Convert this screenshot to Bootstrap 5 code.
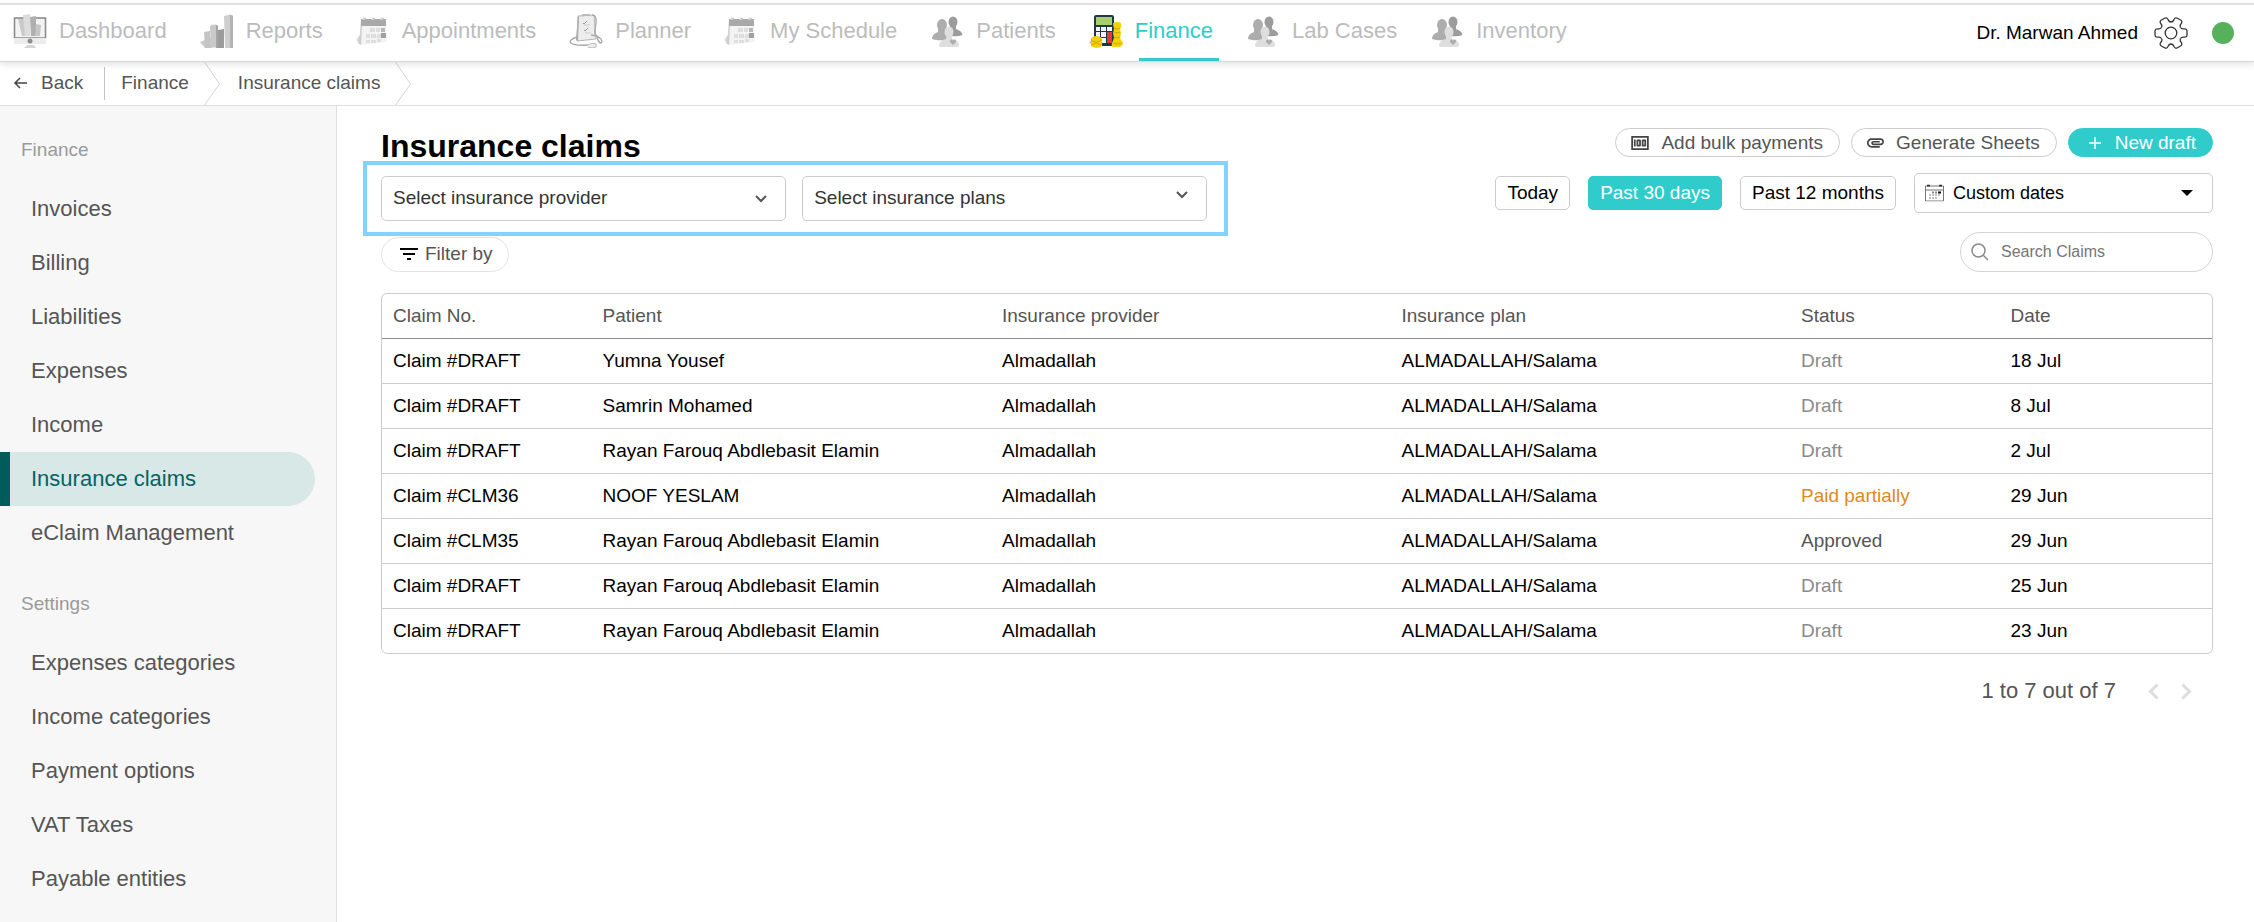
<!DOCTYPE html>
<html lang="en">
<head>
<meta charset="utf-8">
<meta name="viewport" content="width=device-width, initial-scale=1">
<title>Insurance claims</title>
<link rel="stylesheet" href="https://cdn.jsdelivr.net/npm/bootstrap@5.3.0/dist/css/bootstrap.min.css">
<style>
  :root { --teal: #30cccc; --line: #ccc; --ink: #555; }
  body { font-family: "Liberation Sans", Arial, sans-serif; font-size: 19px; line-height: 28px; color: #000; background: #fff; }
  a { color: inherit; text-decoration: none; }
  svg { flex: none; display: block; }

  /* top bar */
  .topbar { margin-top: 3px; border-top: 2px solid #e0e0e0; border-bottom: 1px solid #d6d6d6; height: 59px; padding: 0 20px 0 13px; box-shadow: 0 3px 6px rgba(0,0,0,.1); position: relative; z-index: 2; background: #fff; }
  .main-nav { gap: 33px; font-size: 22px; color: #bcbcbc; }
  .main-nav a { display: flex; align-items: center; gap: 12px; height: 56px; padding-bottom: 4px; }
  .main-nav .current { color: var(--teal); position: relative; }
  .main-nav .current::after { content: ""; position: absolute; bottom: 0; left: 50px; right: -6px; height: 3px; background: var(--teal); }
  .online-dot { width: 22px; height: 22px; background: #57b05c; }

  /* breadcrumb bar */
  .crumbs { height: 44px; border-bottom: 1px solid #e0e0e0; color: var(--ink); padding-left: 13px; }
  .crumbs a { padding-bottom: 2px; }
  .crumbs .back { gap: 13px; padding-right: 21px; }
  .crumb-first { padding: 0 15px 0 16px; }
  .crumb-next { padding: 0 15px 0 17px; }
  .crumb-rule { width: 1px; height: 33px; background: #c4c4c4; }

  /* sidebar */
  .page-body { min-height: calc(100vh - 106px); }
  .sidebar { width: 337px; background: #f7f7f7; border-right: 1px solid #e0e0e0; flex: none; }
  .sidebar h2 { font-size: 19px; line-height: 28px; font-weight: 400; color: #9a9a9a; margin: 0; padding: 30px 21px 18px; }
  .sidebar a { display: block; font-size: 22px; line-height: 54px; padding-left: 31px; margin-right: 21px; color: var(--ink); }
  .sidebar a.active { color: #056363; background: #d8e8e7; border-left: 10px solid #005c5c; padding-left: 21px; border-radius: 0 27px 27px 0; }

  /* content */
  .content { padding: 22px 41px 0 44px; min-width: 0; }
  .content h1 { font-size: 32px; line-height: 30px; font-weight: 700; margin: 0; padding-top: 3px; }
  .left-tools { width: 46.25%; }
  .highlight { border: 4px solid #80d4ff; margin-left: -18px; padding: 11px 17px 11px 14px; gap: 16px; }
  .field { border: 1px solid var(--line); border-radius: 5px; height: 45px; font-size: 19px; line-height: 28px; padding: 0 40px 2px 11px; color: #333; background-size: 12px 8px; }
  .provider { background-image: url("data:image/svg+xml,%3Csvg xmlns='http://www.w3.org/2000/svg' viewBox='0 0 12 8'%3E%3Cpath d='M1 1l5 5 5-5' fill='none' stroke='%23555' stroke-width='2'/%3E%3C/svg%3E"); background-position: right 18px center; }
  .plans { background-image: url("data:image/svg+xml,%3Csvg xmlns='http://www.w3.org/2000/svg' viewBox='0 0 12 8'%3E%3Cpath d='M1 1l5 5 5-5' fill='none' stroke='%23555' stroke-width='2'/%3E%3C/svg%3E"); background-position: right 18px top 14px; }
  .pill, .pill:hover { display: flex; align-items: center; font-size: 19px; line-height: 27px; border: 1px solid var(--line); border-radius: 18px; background: #fff; color: var(--ink); padding: 0 16px 0 15px; height: 29px; gap: 12px; }
  .action-row { gap: 11px; }
  .filter-pill { height: 35px; border-color: #e3e3e3; padding: 0 15px 2px 18px; gap: 7px; margin-top: 1px; }
  .new-pill, .new-pill:hover { background: var(--teal); border-color: var(--teal); color: #fff; padding-left: 20px; gap: 14px; }
  .range { gap: 18px; margin-top: 16px; }
  .range .btn { font-size: 19px; line-height: 32px; padding: 0 11px; border: 1px solid var(--line); border-radius: 5px; background: #fff; color: #000; }
  .range .btn.chosen { background: var(--teal); border-color: var(--teal); color: #fff; }
  .dates { width: 299px; height: 40px; font-size: 18px; color: #000; padding: 0 40px 0 38px; background-image: url("data:image/svg+xml,%3Csvg xmlns='http://www.w3.org/2000/svg' viewBox='0 0 12 6'%3E%3Cpath d='M0 0h12L6 6z'/%3E%3C/svg%3E"); background-size: 12px 6px; background-position: right 19px center; }
  .over-left { position: absolute; left: 11px; top: 50%; transform: translateY(-50%); pointer-events: none; }
  .search-wrap { margin-top: 19px; width: 253px; }
  .search-wrap input { height: 40px; border-radius: 20px; border: 1px solid #d4d4d4; font-size: 16px; padding: 0 12px 0 40px; }
  .search-wrap input::placeholder { color: #757575; }

  /* claims table */
  .claims-box { border: 1px solid var(--line); border-radius: 6px; margin-top: 21px; overflow: hidden; }
  .claims { table-layout: fixed; border-collapse: separate; border-spacing: 0; margin: 0; color: #000; --bs-table-bg: transparent; }
  .claims th, .claims td { font-weight: 400; line-height: 26px; height: 45px; padding: 0 11px; vertical-align: middle; border: 0; border-bottom: 1px solid var(--line); box-shadow: none; color: #000; }
  .claims thead th { color: var(--ink); border-bottom-color: #8c8c8c; }
  .claims tbody tr:last-child td { border-bottom: 0; height: 44px; }
  .narrow { width: 11.45%; }
  .wide { width: 21.83%; }
  .claims .draft { color: #8a8a8a; }
  .claims .partial { color: #dd8a22; }
  .claims .approved { color: var(--ink); }
  .pager { font-size: 22px; color: var(--ink); padding: 23px 10px 0 0; }
  .pager span { margin-right: 21px; }
  .pager button { border: 0; background: none; padding: 0 11px; }
</style>
</head>
<body>
<svg width="0" height="0" class="position-absolute" aria-hidden="true">
  <defs>
    <symbol id="i-cal" viewBox="0 0 34 34">
      <path d="M0 26l5-7 2 10-3 1z" fill="#dcdcdc"/>
      <path d="M5 5h25v9l1 14-26 3-1-3z" fill="#f3f3f3"/>
      <path d="M5 5l-1 17-2 7 3 2 1-18z" fill="#ccc"/>
      <path d="M5 5h25v7H5z" fill="#a9a9a9"/>
      <path d="M8 6V3.500M17 6V3.500M26 6V3.500" stroke="#ddd" stroke-width="3"/>
      <path d="M9 6V4M18 6V4M27 6V4" stroke="#aaa" stroke-width="1"/>
      <path d="M14 14h5v4h-5zM20 14h4v4h-4zM10 20h4v4h-4zM15 20h5v4h-5zM21 20h4v4h-4zM10 26h4v3h-4zM15 26h5v3h-5zM21 25h4v3h-4z" fill="#dedede"/>
      <path d="M25 14h4v4h-4z" fill="#b9b9b9"/><path d="M25 19h5v5h-5z" fill="#a0a0a0"/>
    </symbol>
    <symbol id="i-people" viewBox="0 0 34 34">
      <ellipse cx="23" cy="8" rx="4.500" ry="5.500" fill="#9c9c9c"/><path d="M20 12h6v3q6 2 6.500 6-5 2-11 1z" fill="#9c9c9c"/>
      <ellipse cx="12" cy="11" rx="5" ry="6" fill="#adadad"/><path d="M8 15h8v3l6 4-3 4q-12 1-17-1 0-5 6-7z" fill="#adadad"/>
      <ellipse cx="19" cy="18" rx="4.500" ry="5.500" fill="#dedede"/><path d="M16 22h6v3q7 1 7 6 0 2-2 2H11q-2 0-2-2 1-5 7-6z" fill="#dedede"/>
      <path d="M23 31l-3-3q-.5-2.500 1.500-2.500 1 0 1.500 1 .5-1 1.500-1 2 0 1.500 2.500z" fill="#adadad"/>
    </symbol>
  </defs>
</svg>

<header class="topbar d-flex justify-content-between align-items-center">
  <nav class="main-nav d-flex" aria-label="Main">
    <a href="#"><svg width="34" height="34" viewBox="0 0 34 34"><rect x="1.500" y="4" width="31" height="20" fill="#f3f3f3" stroke="#8d8d8d" stroke-width="1.600"/><path d="M5 5h6l2 17H9z" fill="#cacaca"/><path d="M10 1l7-1v22h-5z" fill="#dcdcdc"/><path d="M17 3l6-1v20h-5z" fill="#b0b0b0"/><path d="M23 10l5 1-1 11h-5z" fill="#c6c6c6"/><path d="M1 24h32v6H1z" fill="#ececec"/><circle cx="17" cy="27" r="2.500" fill="#8e8e8e"/><path d="M14 31h7l2 3H11z" fill="#d5d5d5"/></svg>Dashboard</a>
    <a href="#"><svg width="34" height="34" viewBox="0 0 34 34"><path d="M0 28l5-2v8zM8 24l4-2v12H9z" fill="#c9c9c9"/><path d="M4 18l6-1v17H5z" fill="#c4c4c4"/><path d="M10 13l1-2 5-.5 2 1v22h-7z" fill="#c9c9c9"/><path d="M16 11l2 1v22h-2z" fill="#a5a5a5"/><path d="M18 16l6-1v19h-6z" fill="#9c9c9c"/><path d="M24 2l6-1.500 3 1V34h-8z" fill="#cfcfcf"/><path d="M30 1l3 1v32h-3z" fill="#b4b4b4"/></svg>Reports</a>
    <a href="#"><svg width="34" height="34"><use href="#i-cal"/></svg>Appointments</a>
    <a href="#"><svg width="34" height="34" viewBox="0 0 34 34" fill="none"><path d="M9 2l16-1 2 24-19 2z" fill="#ededed" stroke="#b5b5b5"/><path d="M9 2L7 26l2 1 1-24z" fill="#aaa"/><path d="M13 2q3-3 8-.5" stroke="#bbb" stroke-width="2"/><path d="M14 9l1 1 3-3M15 16l1 1 3-3" stroke="#999"/><path d="M15 11h6M16 19h6" stroke="#ccc"/><path d="M8 23q-9 3-6 6t17 2M23 1q5 0 4 8l-1 7q-1 4 2 6l4 3q2 4-1 4-3-3-3-7l-6-1" stroke="#a9a9a9" stroke-width="1.400"/><path d="M19 31q4-3 8-1v3q-4 2-8 0" stroke="#bbb" fill="#eee"/></svg>Planner</a>
    <a href="#"><svg width="34" height="34"><use href="#i-cal"/></svg>My Schedule</a>
    <a href="#"><svg width="34" height="34"><use href="#i-people"/></svg>Patients</a>
    <a href="#" class="current" aria-current="page"><svg width="34" height="34" viewBox="0 0 34 34"><rect x="5" y="1" width="20" height="31" rx="2" fill="#203746"/><rect x="7" y="3" width="16" height="8" fill="#a8cf6d"/><path d="M7 13h4v4H7zM12 13h5v4h-5zM18 13h5v4h-5zM7 18h4v5H7zM12 18h5v5h-5zM12 24h5v5h-5z" fill="#f1f5f8"/><path d="M18 18h5v11h-5z" fill="#e23a35"/><path d="M24 10q0-2 4-2t4 2v3l-1 2 1 4-1 5 3 5q0 3-4 4h-6q-2-1-1-4l2-5-1-5 1-4z" fill="#f5d000"/><path d="M25 14q3 2 6 0M25 18q3 2 6 0M25 23q3 2 6 0M24 29q4 2 8 0" stroke="#cda900" fill="none"/><path d="M0 29l3-4v5z" fill="#bbb"/><path d="M2 24q5-4 11 0v8q-5 4-11 0z" fill="#f5d000"/><path d="M2 26q5 4 11 0M2 31l5-2 5 2" stroke="#cda900" fill="none"/></svg>Finance</a>
    <a href="#"><svg width="34" height="34"><use href="#i-people"/></svg>Lab Cases</a>
    <a href="#"><svg width="34" height="34"><use href="#i-people"/></svg>Inventory</a>
  </nav>
  <div class="d-flex align-items-center">
    <span>Dr. Marwan Ahmed</span>
    <a href="#" aria-label="Settings" class="ms-3 me-4"><svg width="34" height="32" viewBox="-17 -16 34 32" fill="none" stroke="#333" stroke-width="1.300"><defs><path id="tooth" d="M9.500-5.500q1 1.600 3 1.400 3.500-.6 3.500 2.300v3.600q0 2.900-3.500 2.300-2-.2-3 1.400"/></defs><use href="#tooth"/><use href="#tooth" transform="rotate(60)"/><use href="#tooth" transform="rotate(120)"/><use href="#tooth" transform="rotate(180)"/><use href="#tooth" transform="rotate(240)"/><use href="#tooth" transform="rotate(300)"/><circle r="5.800"/></svg></a>
    <span class="online-dot rounded-circle"></span>
  </div>
</header>

<nav class="crumbs d-flex align-items-center" aria-label="Breadcrumb">
  <a href="#" class="back d-flex align-items-center"><svg width="15" height="12" viewBox="0 0 15 12" fill="none" stroke="#444" stroke-width="1.500"><path d="M14 6H2M7 1L2 6l5 5"/></svg>Back</a>
  <span class="crumb-rule"></span>
  <a href="#" class="crumb-first">Finance</a>
  <svg width="17" height="43" viewBox="0 0 17 43" fill="none" stroke="#d4d4d4"><path d="M.5 0l15 22-15 21"/></svg>
  <a href="#" class="crumb-next">Insurance claims</a>
  <svg width="17" height="43" viewBox="0 0 17 43" fill="none" stroke="#d4d4d4"><path d="M.5 0l15 22-15 21"/></svg>
</nav>

<div class="page-body d-flex">
  <aside class="sidebar">
    <h2>Finance</h2>
    <nav aria-label="Finance">
      <a href="#">Invoices</a>
      <a href="#">Billing</a>
      <a href="#">Liabilities</a>
      <a href="#">Expenses</a>
      <a href="#">Income</a>
      <a href="#" class="active" aria-current="page">Insurance claims</a>
      <a href="#">eClaim Management</a>
    </nav>
    <h2>Settings</h2>
    <nav aria-label="Settings">
      <a href="#">Expenses categories</a>
      <a href="#">Income categories</a>
      <a href="#">Payment options</a>
      <a href="#">VAT Taxes</a>
      <a href="#">Payable entities</a>
    </nav>
  </aside>

  <main class="content flex-grow-1">
    <div class="d-flex justify-content-between align-items-start">
      <div class="left-tools">
        <h1>Insurance claims</h1>
        <div class="highlight d-flex">
          <select class="form-select field provider" aria-label="Insurance provider"><option>Select insurance provider</option></select>
          <select class="form-select field plans" aria-label="Insurance plans"><option>Select insurance plans</option></select>
        </div>
        <button type="button" class="btn pill filter-pill"><svg width="18" height="12" viewBox="3 6 18 12"><path d="M10 18h4v-2h-4v2zM3 6v2h18V6H3zm3 7h12v-2H6v2z"/></svg>Filter by</button>
      </div>
      <div class="d-flex flex-column align-items-end">
        <div class="d-flex action-row">
          <button type="button" class="btn pill"><svg width="18" height="14" viewBox="2 4 20 16" fill="#444"><path d="M5 8h2v8H5zm7 0H9c-.55 0-1 .45-1 1v6c0 .55.45 1 1 1h3c.55 0 1-.45 1-1V9c0-.55-.45-1-1-1zm-1 6h-1v-4h1v4zm7-6h-3c-.55 0-1 .45-1 1v6c0 .55.45 1 1 1h3c.55 0 1-.45 1-1V9c0-.55-.45-1-1-1zm-1 6h-1v-4h1v4zM2 4v16h20V4H2zm2 14V6h16v12H4z"/></svg>Add bulk payments</button>
          <button type="button" class="btn pill"><svg width="17" height="10" viewBox="2 7 20 11" fill="#444"><path d="M2 12.500C2 9.460 4.460 7 7.500 7H18c2.210 0 4 1.790 4 4s-1.790 4-4 4H9.500C8.120 15 7 13.880 7 12.500S8.120 10 9.500 10H17v2H9.410c-.55 0-.55 1 0 1H18c1.100 0 2-.9 2-2s-.9-2-2-2H7.500C5.570 9 4 10.570 4 12.500S5.570 16 7.500 16H17v2H7.500C4.460 18 2 15.540 2 12.500z"/></svg>Generate Sheets</button>
          <button type="button" class="btn pill new-pill"><svg width="12" height="12" viewBox="0 0 12 12" stroke="#fff" stroke-width="1.500"><path d="M6 0v12M0 6h12"/></svg>New draft</button>
        </div>
        <div class="range d-flex align-items-center">
          <button type="button" class="btn">Today</button>
          <button type="button" class="btn chosen">Past 30 days</button>
          <button type="button" class="btn">Past 12 months</button>
          <div class="position-relative">
            <select class="form-select field dates" aria-label="Custom dates"><option>Custom dates</option></select>
            <svg class="over-left" width="19" height="17" viewBox="0 0 19 17"><path d="M.5 1.500h18v15H.5z" fill="none" stroke="#777"/><path d="M1 5.500h17" stroke="#777"/><path d="M2 0h3v2H2zM14 0h3v2h-3z" fill="#333"/><path d="M7 7h2v2H7zM10 7h2v2h-2zM4 10h2v1H4zM7 10h2v1H7zM10 10h2v1h-2zM13 10h2v1h-2zM4 13h2v1H4zM7 13h2v1H7zM10 13h2v1h-2z" fill="#888"/><path d="M13 7h3v2h-3z" fill="#111"/></svg>
          </div>
        </div>
        <div class="search-wrap position-relative">
          <input type="search" class="form-control" placeholder="Search Claims" aria-label="Search Claims">
          <svg class="over-left" width="18" height="18" viewBox="0 0 18 18" fill="none" stroke="#8c8c8c" stroke-width="1.500"><circle cx="7.500" cy="7.500" r="6.500"/><path d="M12 12l5 5"/></svg>
        </div>
      </div>
    </div>

    <div class="claims-box">
      <table class="table claims">
        <colgroup><col class="narrow"><col class="wide"><col class="wide"><col class="wide"><col class="narrow"><col></colgroup>
        <thead><tr><th>Claim No.</th><th>Patient</th><th>Insurance provider</th><th>Insurance plan</th><th>Status</th><th>Date</th></tr></thead>
        <tbody>
          <tr><td>Claim #DRAFT</td><td>Yumna Yousef</td><td>Almadallah</td><td>ALMADALLAH/Salama</td><td class="draft">Draft</td><td>18 Jul</td></tr>
          <tr><td>Claim #DRAFT</td><td>Samrin Mohamed</td><td>Almadallah</td><td>ALMADALLAH/Salama</td><td class="draft">Draft</td><td>8 Jul</td></tr>
          <tr><td>Claim #DRAFT</td><td>Rayan Farouq Abdlebasit Elamin</td><td>Almadallah</td><td>ALMADALLAH/Salama</td><td class="draft">Draft</td><td>2 Jul</td></tr>
          <tr><td>Claim #CLM36</td><td>NOOF YESLAM</td><td>Almadallah</td><td>ALMADALLAH/Salama</td><td class="partial">Paid partially</td><td>29 Jun</td></tr>
          <tr><td>Claim #CLM35</td><td>Rayan Farouq Abdlebasit Elamin</td><td>Almadallah</td><td>ALMADALLAH/Salama</td><td class="approved">Approved</td><td>29 Jun</td></tr>
          <tr><td>Claim #DRAFT</td><td>Rayan Farouq Abdlebasit Elamin</td><td>Almadallah</td><td>ALMADALLAH/Salama</td><td class="draft">Draft</td><td>25 Jun</td></tr>
          <tr><td>Claim #DRAFT</td><td>Rayan Farouq Abdlebasit Elamin</td><td>Almadallah</td><td>ALMADALLAH/Salama</td><td class="draft">Draft</td><td>23 Jun</td></tr>
        </tbody>
      </table>
    </div>
    <div class="pager d-flex justify-content-end align-items-center">
      <span>1 to 7 out of 7</span>
      <button type="button" aria-label="Previous page"><svg width="11" height="17" viewBox="0 0 11 17" fill="none" stroke="#ddd" stroke-width="3"><path d="M9.500 1.500l-7 7 7 7"/></svg></button>
      <button type="button" aria-label="Next page"><svg width="11" height="17" viewBox="0 0 11 17" fill="none" stroke="#ddd" stroke-width="3"><path d="M1.500 1.500l7 7-7 7"/></svg></button>
    </div>
  </main>
</div>
<script src="https://cdn.jsdelivr.net/npm/bootstrap@5.3.0/dist/js/bootstrap.bundle.min.js"></script>
</body>
</html>
